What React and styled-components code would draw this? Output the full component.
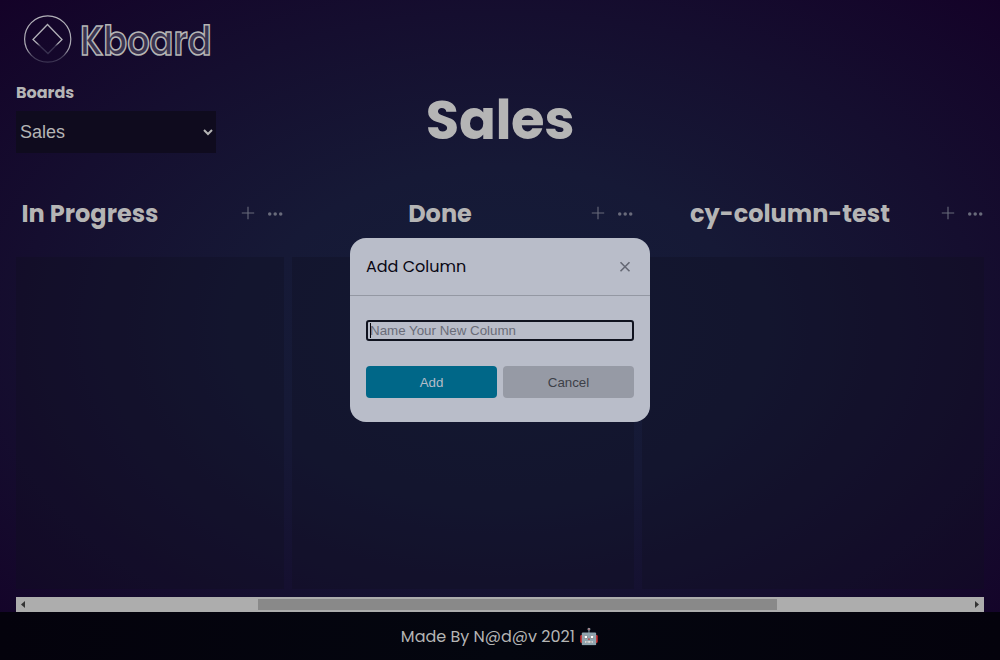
import React from 'react';
import styled, { createGlobalStyle } from 'styled-components';

const GlobalStyle = createGlobalStyle`
  * { box-sizing: border-box; }
  body { margin: 0; overflow: hidden; background: #150428; }
`;
const Page = styled.div`
  display: flex;
  flex-direction: column;
  height: 660px;
  color: #b5b5b5;
  font-family: Poppins, sans-serif;
  background: radial-gradient(ellipse at center, #141d39 0%, #161936 35%, #150e2f 68%, #140228 100%);
`;
const LogoBar = styled.header`
  height: 78px;
  padding: 8px 16px;
`;
const Toolbar = styled.section`
  display: grid;
  grid-template-columns: 200px 1fr 200px;
  height: 102px;
  padding: 0 16px;
`;
const BoardPicker = styled.label`
  display: flex;
  flex-direction: column;
  gap: 5px;
  padding-top: 1px;
  font-size: 16px;
  font-weight: 700;
  line-height: 27px;
`;
const BoardSelect = styled.select`
  width: 200px;
  height: 42px;
  border: 0;
  border-radius: 0;
  color: #b5b5b5;
  background: #0f0b1e;
  font: 18px 'Liberation Sans', sans-serif;
`;
const BoardTitle = styled.h1`
  margin: 0;
  text-align: center;
  font-size: 54.4px;
  font-weight: 700;
  line-height: 84px;
  letter-spacing: -0.4px;
`;
const Columns = styled.main`
  display: flex;
  flex: 1;
  gap: 8px;
  margin: 0 16px;
  overflow: hidden;
`;
const Column = styled.section`
  flex: 0 0 342px;
  height: 409px;
  &:first-child { margin-left: -74px; }
`;
const ColumnHeader = styled.div`
  display: grid;
  grid-template-columns: 296px 46px;
  align-items: center;
  height: 77px;
  padding-bottom: 10px;
`;
const ColumnTitle = styled.h2`
  margin: 0;
  text-align: center;
  font-size: 24px;
  font-weight: 700;
  line-height: 36px;
`;
const ColumnActions = styled.div`
  display: flex;
  gap: 12px;
  padding: 0 0 2px 3px;
  color: #696b7b;
`;
const CardList = styled.div`
  height: 332px;
  background: rgba(16, 14, 32, 0.32);
`;
const ScrollTrack = styled.div`
  display: flex;
  align-items: center;
  justify-content: space-between;
  flex: 0 0 15px;
  margin: 0 16px;
  padding: 0 5px;
  background: #adadad;
`;
const ScrollThumb = styled.div`
  width: 519px;
  height: 11px;
  margin-left: 35px;
  background: #898989;
`;
const Footer = styled.footer`
  display: flex;
  align-items: center;
  justify-content: center;
  flex: 0 0 48px;
  background: linear-gradient(90deg, #04020c, #04060f 50%, #04020c);
  font-size: 16px;
  white-space: pre;
`;
const Modal = styled.div`
  position: absolute;
  left: 350px;
  top: 238px;
  width: 300px;
  height: 184px;
  overflow: hidden;
  border-radius: 16px;
  background: #b9bdc9;
`;
const ModalHeader = styled.div`
  display: flex;
  align-items: center;
  justify-content: space-between;
  height: 58px;
  padding: 0 19px 0 16px;
  border-bottom: 1px solid #9498a3;
  color: #090713;
  font-size: 16px;
`;
const ModalForm = styled.div`
  padding: 24px 16px;
`;
const Field = styled.div`
  position: relative;
`;
const NameInput = styled.input`
  display: block;
  width: 268px;
  height: 21px;
  padding: 1px 2px;
  border: 2px solid #10131f;
  border-radius: 3px;
  background: transparent;
  font: 13.333px 'Liberation Sans', sans-serif;
  &::placeholder { color: #696c78; }
`;
const Caret = styled.span`
  position: absolute;
  left: 4px;
  top: 3px;
  width: 1px;
  height: 15px;
  background: #05050c;
`;
const Buttons = styled.div`
  display: grid;
  grid-template-columns: 1fr 1fr;
  gap: 6px;
  margin-top: 25px;
`;
const Button = styled.button`
  height: 32px;
  border: 0;
  border-radius: 4px;
  color: ${(p) => (p.$primary ? '#b5bdc9' : '#3d4048')};
  background: ${(p) => (p.$primary ? '#006788' : '#969aa5')};
  font: 13.333px 'Liberation Sans', sans-serif;
`;

const Logo = () => (
  <svg width="300" height="62" viewBox="16 8 300 62" fill="none" overflow="visible">
    <defs>
      <linearGradient id="fade" x1="0" y1="15" x2="0" y2="63" gradientUnits="userSpaceOnUse">
        <stop offset="0" stopColor="#b2b1b8" />
        <stop offset=".72" stopColor="#aaa8b2" />
        <stop offset=".86" stopColor="#4a435e" />
        <stop offset="1" stopColor="#393150" />
      </linearGradient>
      <linearGradient id="diamond" x1="0" y1="24" x2="0" y2="54" gradientUnits="userSpaceOnUse">
        <stop offset="0" stopColor="#b2b1b8" />
        <stop offset=".64" stopColor="#b2b1b8" />
        <stop offset=".74" stopColor="#393150" />
        <stop offset="1" stopColor="#393150" />
      </linearGradient>
    </defs>
    <circle cx="47.7" cy="39" r="23.1" stroke="url(#fade)" strokeWidth="1.2" />
    <path d="M47.5 24.5 62 39.5 48 53.5 33 39.5Z" stroke="url(#diamond)" strokeWidth="1.3" />
    <text
      x="80" y="54.5" textLength="131.5" lengthAdjust="spacingAndGlyphs"
      fontFamily="Poppins, sans-serif" fontSize="41" fontWeight="600"
      fill="#39334f" stroke="#b5b5b5" strokeWidth="1.6"
    >Kboard</text>
  </svg>
);

const PlusIcon = () => (
  <svg width="14" height="14" viewBox="0 0 14 14" stroke="currentColor" strokeWidth="1.1">
    <path d="M7 .8V13.2M.8 7H13.2" />
  </svg>
);
const MoreIcon = () => (
  <svg width="16" height="14" viewBox="0 0 16 14" fill="currentColor">
    <circle cx="2.7" cy="7.9" r="1.75" />
    <circle cx="8.2" cy="7.9" r="1.75" />
    <circle cx="13.7" cy="7.9" r="1.75" />
  </svg>
);
const CloseIcon = () => (
  <svg width="12" height="12" viewBox="0 0 12 12" stroke="#666975" strokeWidth="1.6">
    <path d="M1.5 1.2 10.5 10.3M10.5 1.2 1.5 10.3" />
  </svg>
);
const ScrollArrow = ({ right }) => (
  <svg width="4" height="7" viewBox="0 0 4 7" fill="#343434">
    <path d={right ? 'M0 0 4 3.5 0 7Z' : 'M4 0 0 3.5 4 7Z'} />
  </svg>
);

const columns = ['In Progress', 'Done', 'cy-column-test'];

export default function App() {
  return (
    <Page>
      <GlobalStyle />
      <LogoBar><Logo /></LogoBar>
      <Toolbar>
        <BoardPicker>
          Boards
          <BoardSelect defaultValue="Sales"><option>Sales</option></BoardSelect>
        </BoardPicker>
        <BoardTitle>Sales</BoardTitle>
      </Toolbar>
      <Columns>
        {columns.map((name) => (
          <Column key={name}>
            <ColumnHeader>
              <ColumnTitle>{name}</ColumnTitle>
              <ColumnActions><PlusIcon /><MoreIcon /></ColumnActions>
            </ColumnHeader>
            <CardList />
          </Column>
        ))}
      </Columns>
      <ScrollTrack>
        <ScrollArrow />
        <ScrollThumb />
        <ScrollArrow right />
      </ScrollTrack>
      <Footer>Made By N@d@v 2021 🤖</Footer>
      <Modal>
        <ModalHeader>Add Column<CloseIcon /></ModalHeader>
        <ModalForm>
          <Field>
            <NameInput placeholder="Name Your New Column" />
            <Caret />
          </Field>
          <Buttons>
            <Button $primary>Add</Button>
            <Button>Cancel</Button>
          </Buttons>
        </ModalForm>
      </Modal>
    </Page>
  );
}
